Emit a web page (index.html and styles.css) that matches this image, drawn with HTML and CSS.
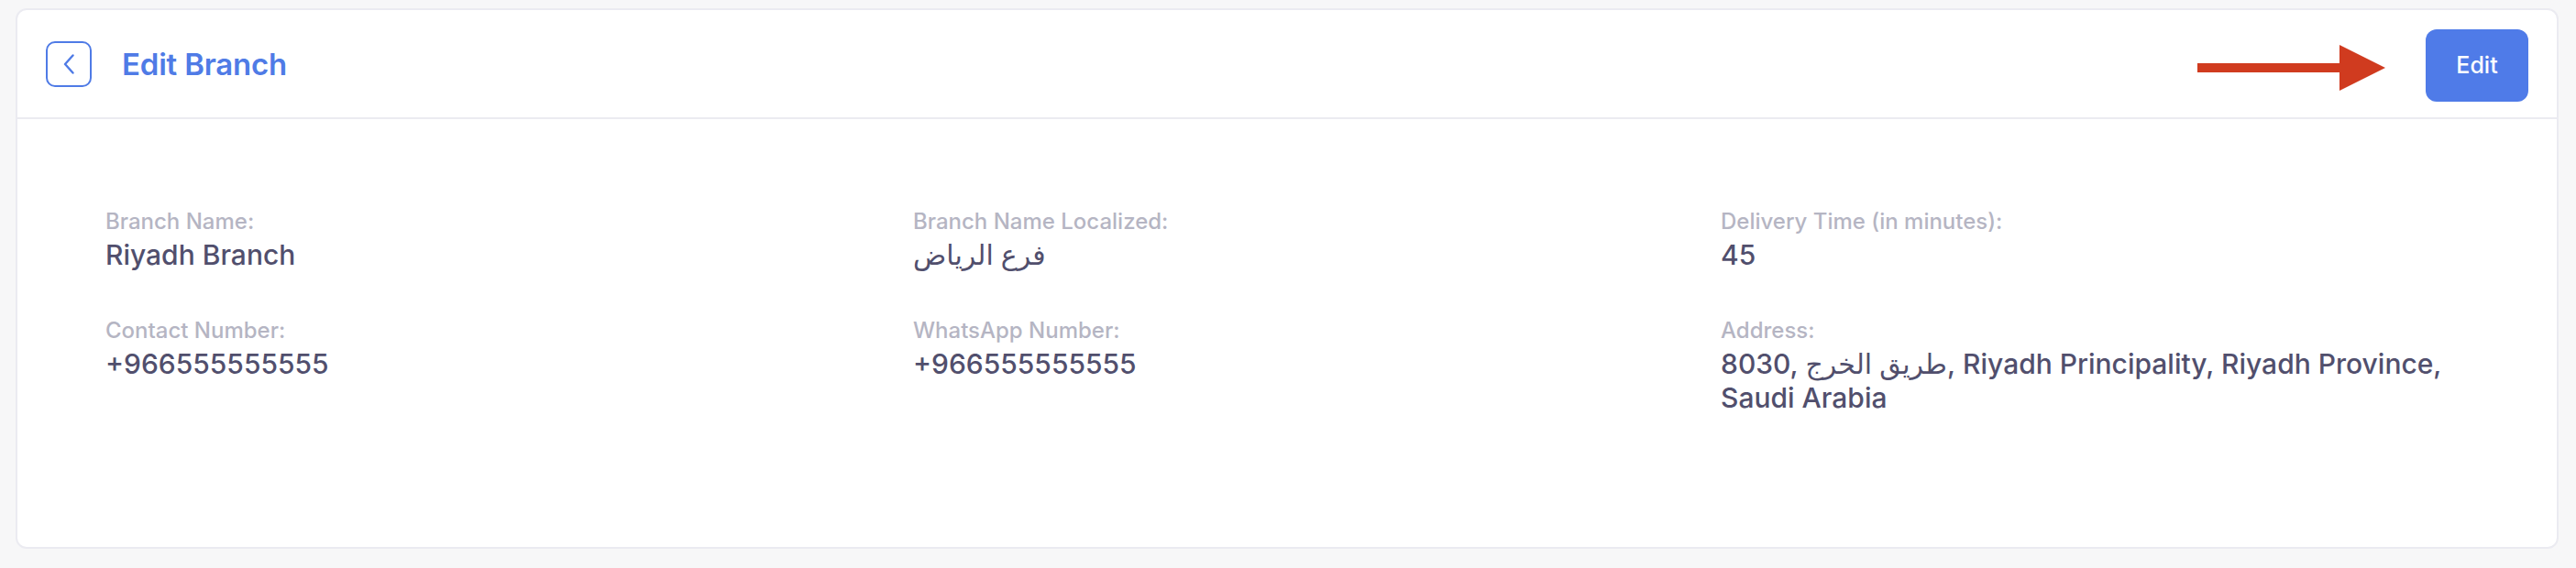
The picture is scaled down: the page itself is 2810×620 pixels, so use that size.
FILE: index.html
```html
<!DOCTYPE html>
<html lang="en">
<head>
<meta charset="utf-8">
<title>Edit Branch</title>
<link rel="stylesheet" href="styles.css">
</head>
<body>
<div class="card">
  <div class="card-header">
    <div class="header-left">
      <button class="back-btn" aria-label="Back">
        <svg width="14" height="22" viewBox="0 0 14 22"><path d="M11.5 1.5 L3 11 L11.5 20.5" fill="none" stroke="#4f7be6" stroke-width="2.4" stroke-linecap="round" stroke-linejoin="round"/></svg>
      </button>
      <h1 class="title">Edit Branch</h1>
    </div>
    <button class="edit-btn">Edit</button>
    <svg class="annot-arrow" width="205" height="50" viewBox="0 0 205 50"><rect x="0" y="20" width="156" height="10" fill="#d03b1f"/><polygon points="155,0 205,25 155,50" fill="#d03b1f"/></svg>
  </div>
  <div class="card-body">
    <div class="details">
      <div class="field">
        <div class="label">Branch Name:</div>
        <div class="value">Riyadh Branch</div>
      </div>
      <div class="field">
        <div class="label">Branch Name Localized:</div>
        <div class="value" dir="rtl">فرع الرياض</div>
      </div>
      <div class="field">
        <div class="label">Delivery Time (in minutes):</div>
        <div class="value">45</div>
      </div>
      <div class="field">
        <div class="label">Contact Number:</div>
        <div class="value">+966555555555</div>
      </div>
      <div class="field">
        <div class="label">WhatsApp Number:</div>
        <div class="value">+966555555555</div>
      </div>
      <div class="field">
        <div class="label">Address:</div>
        <div class="value address">8030, طريق الخرج, Riyadh Principality, Riyadh Province, Saudi Arabia</div>
      </div>
    </div>
  </div>
</div>
</body>
</html>
```
FILE: styles.css
```css
* { box-sizing: border-box; }

body {
  margin: 0;
  background: #f7f7f8;
  font-family: Inter, "Noto Sans", "DejaVu Sans", sans-serif;
}

.card {
  margin: 9px 19px 0 17px;
  height: 590px;
  background: #ffffff;
  border: 2px solid #ebebf1;
  border-radius: 12px;
}

.card-header {
  position: relative;
  height: 119px;
  padding: 0 31px;
  display: flex;
  align-items: center;
  justify-content: space-between;
  border-bottom: 2px solid #ebebf1;
}

.header-left {
  display: flex;
  align-items: center;
  gap: 33px;
}

.back-btn {
  width: 50px;
  height: 50px;
  padding: 0;
  border: 2px solid #4f7be6;
  border-radius: 10px;
  background: #fff;
  display: flex;
  align-items: center;
  justify-content: center;
}

.title {
  margin: 0;
  font-size: 33px;
  font-weight: 600;
  color: #4f7be6;
  letter-spacing: -0.2px;
}

.edit-btn {
  width: 112px;
  height: 79px;
  border: none;
  border-radius: 12px;
  background: #4f7be8;
  color: #ffffff;
  font-family: Inter, sans-serif;
  font-size: 25px;
  font-weight: 500;
  margin-top: 3px;
}

.annot-arrow {
  position: absolute;
  left: 2378px;
  top: 38px;
}

.card-body {
  padding: 97px 40px 0 96px;
}

.details {
  display: grid;
  grid-template-columns: 881px 881px 850px;
  row-gap: 49px;
}

.label {
  font-size: 24px;
  line-height: 30px;
  font-weight: 500;
  color: #b5b5c3;
  margin-bottom: 3px;
}

.value {
  font-size: 30px;
  line-height: 37px;
  font-weight: 500;
  color: #514f6d;
  text-align: left;
}
```
